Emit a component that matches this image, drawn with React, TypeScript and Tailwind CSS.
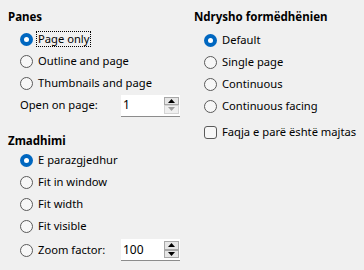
import React from "react";

function Radio({ checked = false }: { checked?: boolean }) {
  if (checked) {
    return (
      <span className="w-[13px] h-[13px] rounded-full bg-[#0067c0] flex items-center justify-center shrink-0">
        <span className="w-[5px] h-[5px] rounded-full bg-white" />
      </span>
    );
  }
  return <span className="w-[13px] h-[13px] rounded-full border border-[#5a5a5a] bg-[#f7f7f7] shrink-0" />;
}

function RadioRow({ label, checked = false, focus = false }: { label: string; checked?: boolean; focus?: boolean }) {
  return (
    <div className="h-[22px] flex items-center whitespace-nowrap">
      <Radio checked={checked} />
      <span
        className={
          focus
            ? "ml-[3px] px-[1px] border border-dotted border-black leading-[14px]"
            : "ml-[5px] leading-[14px]"
        }
      >
        {label}
      </span>
    </div>
  );
}

function Spin({ value, downDisabled = false }: { value: string; downDisabled?: boolean }) {
  return (
    <div className="w-[59px] h-[22px] bg-white border-b border-[#8c8c8c] flex">
      <div className="flex-1 flex items-center pl-[2px] text-[12px]">{value}</div>
      <div className="w-[16px] flex flex-col py-[2px] pr-[1px] gap-0">
        <div className="flex-1 border border-[#a8a8a8] bg-[#e6e6e6] flex items-center justify-center">
          <svg width="7" height="4" viewBox="0 0 7 4">
            <path d="M0 4 L3.5 0 L7 4 Z" fill="#000" />
          </svg>
        </div>
        <div
          className={
            downDisabled
              ? "flex-1 border border-[#d4d4d4] bg-[#f0f0f0] flex items-center justify-center"
              : "flex-1 border border-[#a8a8a8] bg-[#e6e6e6] flex items-center justify-center"
          }
        >
          <svg width="7" height="4" viewBox="0 0 7 4">
            <path d="M0 0 L7 0 L3.5 4 Z" fill={downDisabled ? "#a0a0a0" : "#000"} />
          </svg>
        </div>
      </div>
    </div>
  );
}

export default function App() {
  return (
    <div
      className="w-[364px] h-[270px] bg-[#f0f0f0] text-[11.2px] text-black flex overflow-hidden"
      style={{ fontFamily: '"Noto Sans", "Segoe UI", sans-serif' }}
    >
      <div className="w-[186px] pl-[8px] pt-[9px] flex flex-col shrink-0">
        <div className="h-[16px] flex items-center font-bold text-[11.5px]">Panes</div>
        <div className="pl-[12px] mt-[3px] flex flex-col">
          <RadioRow label="Page only" checked focus />
          <RadioRow label="Outline and page" />
          <RadioRow label="Thumbnails and page" />
          <div className="h-[23px] flex items-center">
            <span className="w-[101px]">Open on page:</span>
            <Spin value="1" downDisabled />
          </div>
        </div>
        <div className="h-[16px] mt-[16px] flex items-center font-bold text-[11.5px]">Zmadhimi</div>
        <div className="pl-[12px] flex flex-col">
          <RadioRow label="E parazgjedhur" checked />
          <RadioRow label="Fit in window" />
          <RadioRow label="Fit width" />
          <RadioRow label="Fit visible" />
          <div className="h-[26px] flex items-center">
            <Radio />
            <span className="ml-[5px] w-[83px]">Zoom factor:</span>
            <Spin value="100" />
          </div>
        </div>
      </div>
      <div className="flex-1 pl-[8px] pt-[9px] flex flex-col whitespace-nowrap">
        <div className="h-[16px] flex items-center font-bold text-[11.5px]">Ndrysho formëdhënien</div>
        <div className="pl-[10px] mt-[4px] flex flex-col">
          <RadioRow label="Default" checked />
          <RadioRow label="Single page" />
          <RadioRow label="Continuous" />
          <RadioRow label="Continuous facing" />
          <div className="h-[26px] mt-[2px] flex items-center">
            <span className="w-[13px] h-[13px] rounded-[3px] border border-[#5a5a5a] bg-[#f7f7f7] shrink-0" />
            <span className="ml-[5px]">Faqja e parë është majtas</span>
          </div>
        </div>
      </div>
    </div>
  );
}
